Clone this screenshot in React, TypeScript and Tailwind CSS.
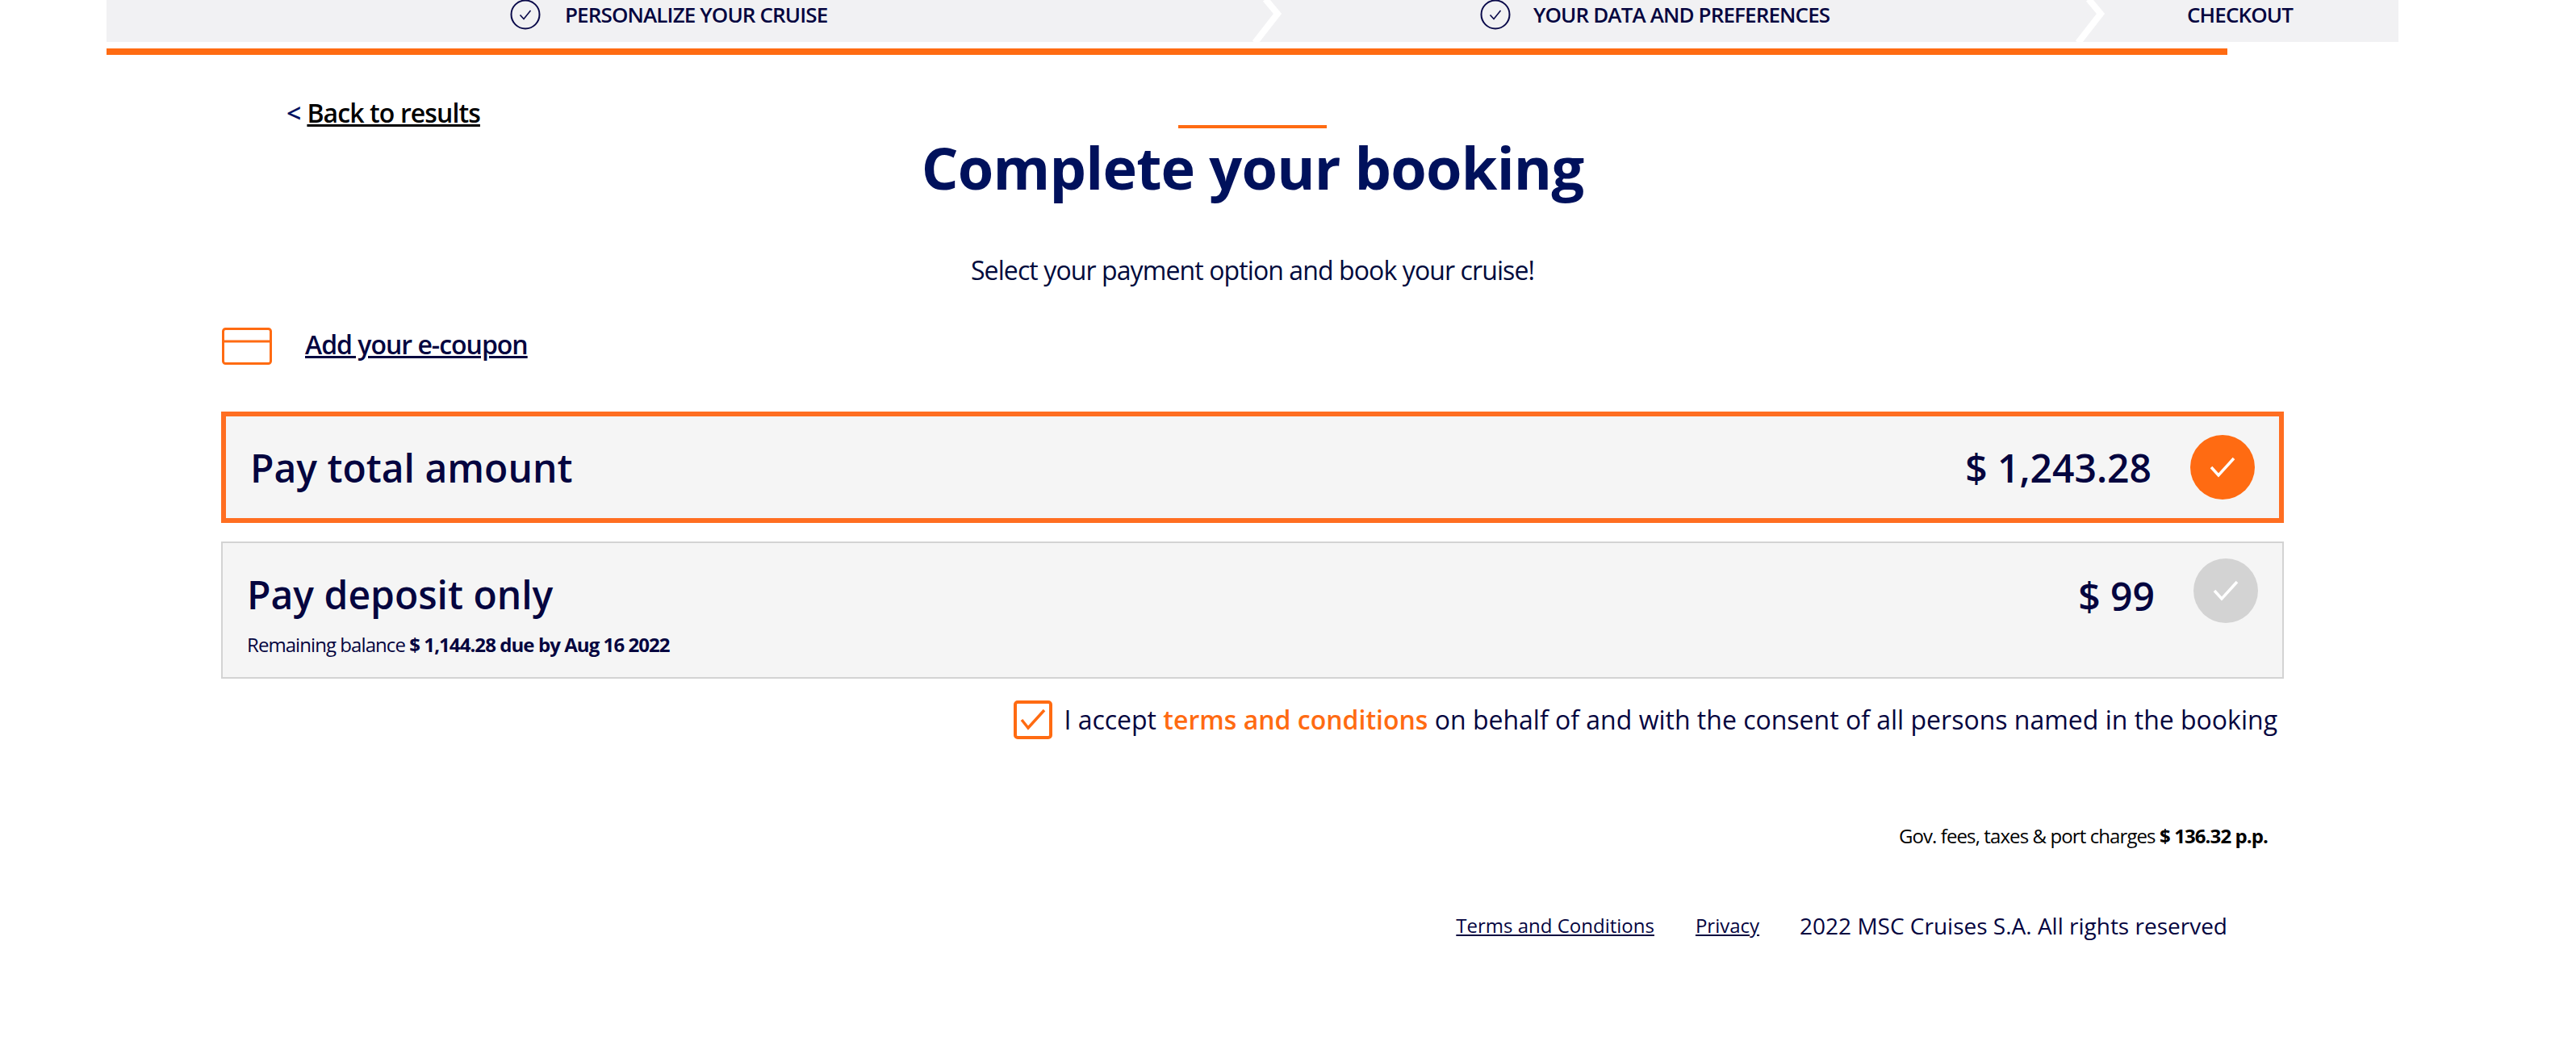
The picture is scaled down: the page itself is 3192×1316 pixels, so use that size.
const FONT = "font-['Open_Sans',sans-serif]";

function CircleCheck() {
  return (
    <svg width="38" height="38" viewBox="0 0 38 38" fill="none" className="shrink-0 -mt-[1px]">
      <circle cx="19" cy="19" r="17.5" stroke="#0a0a4a" strokeWidth="2" />
      <path d="M12.5 19.5l4.5 5 8.5-10.5" stroke="#0a0a4a" strokeWidth="1.6" />
    </svg>
  );
}

function Chevron() {
  return (
    <svg width="40" height="52" viewBox="0 0 40 52" fill="none" className="absolute right-0 top-0">
      <path d="M18 -1 L33 17 L5 53" stroke="#fff" strokeWidth="8" />
    </svg>
  );
}

function RoundCheck({ on }: { on: boolean }) {
  return (
    <div className={`w-[80px] h-[80px] rounded-full flex items-center justify-center shrink-0 ${on ? 'bg-[#ff6b12]' : 'bg-[#d3d3d3]'}`}>
      <svg width="32" height="26" viewBox="0 0 32 26" fill="none">
        <path d="M2 13l9 10L30 2" stroke="#fff" strokeWidth="3.5" />
      </svg>
    </div>
  );
}

export default function App() {
  return (
    <div className={`${FONT} w-[3192px] h-[1316px] bg-white pl-[132px] text-[#05053f] overflow-hidden`}>
      {/* stepper */}
      <div className="w-[2840px] h-[52px] bg-[#f1f1f3] flex text-[26px] leading-[36px] font-semibold tracking-[-0.87px] overflow-hidden">
        <div className="relative w-[1458px] flex items-start pl-[500px] gap-[30px]">
          <CircleCheck />
          <span>PERSONALIZE YOUR CRUISE</span>
          <Chevron />
        </div>
        <div className="relative w-[1020px] flex items-start pl-[244px] gap-[28px]">
          <CircleCheck />
          <span>YOUR DATA AND PREFERENCES</span>
          <Chevron />
        </div>
        <div className="flex-1 flex items-start pl-[100px]">
          <span>CHECKOUT</span>
        </div>
      </div>
      <div className="w-[2628px] h-[8px] mt-[8px] bg-[#ff6b12]" />

      <div className="ml-[142px] w-[2556px]">
        <div className="ml-[81px] mt-[50px] h-[44px] flex items-center text-[32px] font-semibold leading-none tracking-[-0.9px]">
          <span className="text-[#001160] mr-[8px]">&lt;</span>
          <a className="underline text-black">Back to results</a>
        </div>

        <div className="-mt-[7px] flex flex-col items-center">
          <div className="w-[184px] h-[4px] bg-[#ff6b12]" />
          <h1 className="text-[72px] leading-[96px] font-bold text-[#00115c] tracking-[-0.8px]">Complete your booking</h1>
          <p className="mt-[59px] text-[32px] leading-[42px] text-[#000a3c] tracking-[-0.9px]">Select your payment option and book your cruise!</p>
        </div>

        <div className="mt-[50px] flex items-center">
          <svg width="62" height="46" viewBox="0 0 62 46" fill="none" className="ml-[1px]">
            <rect x="1.5" y="1.5" width="59" height="43" rx="3" stroke="#ff6b12" strokeWidth="3" />
            <path d="M2 17h58" stroke="#ff6b12" strokeWidth="3" />
          </svg>
          <a className="ml-[41px] -mt-[4px] text-[32px] font-semibold underline tracking-[-1px]">Add your e-coupon</a>
        </div>

        <div className="mt-[58px] h-[138px] border-[6px] border-[#ff6e21] bg-[#f5f5f5] flex items-center pl-[30px] pr-[30px]">
          <span className="text-[48px] font-semibold mt-[2px]">Pay total amount</span>
          <span className="ml-auto mr-[48px] mt-[2px] text-[48px] font-semibold">$ 1,243.28</span>
          <RoundCheck on />
        </div>

        <div className="mt-[23px] h-[170px] border-2 border-[#d3d3d3] bg-[#f5f5f5] pl-[30px] pr-[30px] pt-[19px] flex justify-between">
          <div className="mt-[12px]">
            <div className="text-[48px] leading-[66px] font-semibold">Pay deposit only</div>
            <div className="mt-[13px] text-[24px] leading-[32px] tracking-[-0.93px]">
              Remaining balance <b className="font-bold">$ 1,144.28 due by Aug 16 2022</b>
            </div>
          </div>
          <div className="flex items-start">
            <span className="mr-[48px] mt-[14px] text-[48px] leading-[66px] font-semibold">$ 99</span>
            <RoundCheck on={false} />
          </div>
        </div>

        <div className="mt-[27px] flex items-center justify-end pr-[8px] text-[32px] leading-[48px]">
          <svg width="48" height="48" viewBox="0 0 48 48" fill="none" className="mr-[14px]">
            <rect x="2" y="2" width="44" height="44" rx="3" stroke="#ff6b12" strokeWidth="4" />
            <path d="M10 24l8 10L38 12" stroke="#ff6b12" strokeWidth="3.5" />
          </svg>
          <span>
            I accept <a className="font-semibold text-[#ff6b12]">terms and conditions</a> on behalf of and with the consent of all persons named in the booking
          </span>
        </div>

        <div className="mt-[104px] text-right pr-[20px] text-[24px] leading-[32px] tracking-[-0.9px] text-black">
          Gov. fees, taxes &amp; port charges <b>$ 136.32 p.p.</b>
        </div>
      </div>

      <div className="w-[2628px] mt-[74px] flex justify-end items-center text-[28px] leading-[42px]">
        <a className="text-[24px] underline mr-[51px]">Terms and Conditions</a>
        <a className="text-[24px] underline mr-[50px]">Privacy</a>
        <span>2022 MSC Cruises S.A. All rights reserved</span>
      </div>
    </div>
  );
}
